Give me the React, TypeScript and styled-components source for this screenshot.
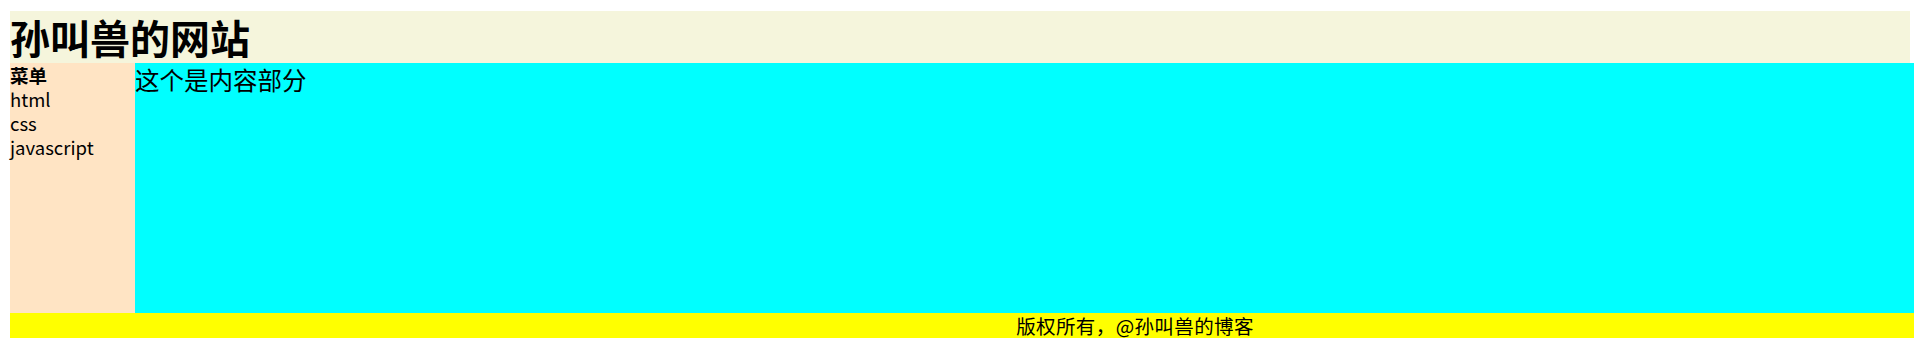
import React from "react";
import styled, { createGlobalStyle } from "styled-components";

const GlobalStyle = createGlobalStyle`
  html, body {
    margin: 0;
    padding: 0;
    background: #ffffff;
    overflow: hidden;
  }
  body {
    font-family: "Noto Sans CJK SC", "Noto Sans", sans-serif;
    color: #000000;
  }
`;

const Page = styled.div`
  width: 1914px;
  overflow: hidden;
  padding: 11px 0 0 10px;
  box-sizing: border-box;
`;

const Header = styled.header`
  width: 1900px;
  height: 52px;
  background: #f5f5dc;
  display: flex;
  align-items: center;
`;

const Title = styled.h1`
  margin: 0;
  font-size: 40px;
  line-height: 44px;
  font-weight: 700;
`;

const Body = styled.div`
  display: flex;
  width: 2250px;
  height: 250px;
`;

const Menu = styled.nav`
  flex: 0 0 125px;
  background: #ffe4c4;
  font-size: 18.5px;
  line-height: 24px;
`;

const MenuTitle = styled.div`
  font-weight: 700;
`;

const MenuItem = styled.div``;

const Content = styled.main`
  flex: 1;
  background: #00ffff;
  font-size: 24.5px;
  line-height: 34px;
`;

const Footer = styled.footer`
  width: 2250px;
  height: 25px;
  background: #ffff00;
  text-align: center;
  font-size: 19.5px;
  line-height: 25px;
  letter-spacing: 0.4px;
`;

export default function App() {
  return (
    <>
      <GlobalStyle />
      <Page>
        <Header>
          <Title>孙叫兽的网站</Title>
        </Header>
        <Body>
          <Menu>
            <MenuTitle>菜单</MenuTitle>
            <MenuItem>html</MenuItem>
            <MenuItem>css</MenuItem>
            <MenuItem>javascript</MenuItem>
          </Menu>
          <Content>这个是内容部分</Content>
        </Body>
        <Footer>版权所有，@孙叫兽的博客</Footer>
      </Page>
    </>
  );
}
